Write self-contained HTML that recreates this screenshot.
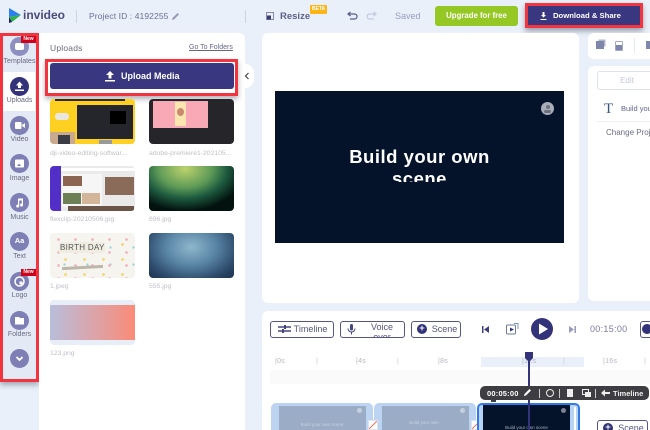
<!DOCTYPE html>
<html style="overflow:hidden;width:650px;height:430px"><head><meta charset="utf-8">
<style>
html,body{margin:0;padding:0}
body{width:650px;height:430px;overflow:hidden;position:relative;background:#e9f0f9;font-family:"Liberation Sans",sans-serif;color:#5b5b8a}
#r{position:absolute;left:0;top:0;width:650px;height:430px;overflow:hidden;background:#e9f0f9}
.a,.a *{box-sizing:border-box}
.a{position:absolute}
.t{position:absolute;white-space:nowrap}
.ic{position:absolute;left:10px;width:19px;height:19px;border-radius:50%;background:#7e80b5}
.lb{position:absolute;left:0;width:39px;text-align:center;font-size:7px;color:#6a6a80;white-space:nowrap}
.th{position:absolute;width:85px;height:45px;border-radius:4px;overflow:hidden}
.cap{position:absolute;font-size:6.800px;color:#c0c0ca;white-space:nowrap}
.btn{position:absolute;box-sizing:border-box;height:17px;border:1px solid #54548f;border-radius:3px;background:#fff;font-size:9px;color:#55557f;text-align:center;line-height:15px}
.clip{position:absolute;top:403px;height:27px;background:#bcd3f2;border-radius:5px 5px 0 0}
.clipi{position:absolute;left:8px;top:3px;width:87px;height:24px;background:#9badc6}
.new{position:absolute;width:15px;height:7px;background:#d0021b;color:#fff;font-size:5px;font-weight:bold;text-align:center;line-height:7px}
</style></head><body><div id="r">

<!-- header -->
<svg class="a" style="left:7px;top:8px" width="16" height="16" viewBox="0 0 16 16"><path d="M2 0 L14 7 L2 9Z" fill="#2d7ff0"/><path d="M2 9 L14 7 L5 14Z" fill="#2fb24a"/><path d="M2 9 L5 14 L2 15Z" fill="#1d1d6b"/></svg>
<div class="t" style="left:23px;top:8px;font-size:12px;font-weight:bold;color:#4a4a80">invideo</div>
<div class="a" style="left:76px;top:10px;width:1px;height:13px;background:#ccd3e0"></div>
<div class="t" style="left:89px;top:11px;font-size:8.500px;color:#6f6f95;letter-spacing:.1px">Project ID : 4192255</div>
<svg class="a" style="left:171px;top:12px" width="9" height="9" viewBox="0 0 9 9"><path d="M1 8 L1.500 6 L6.500 1 L8 2.500 L3 7.500Z" fill="#9a9ab8"/></svg>
<div class="a" style="left:245px;top:10px;width:1px;height:13px;background:#ccd3e0"></div>

<svg class="a" style="left:266px;top:12px" width="8" height="8" viewBox="0 0 8 8"><rect x=".5" y=".5" width="7" height="7" fill="none" stroke="#8a8aa8"/><rect x="1" y="3.500" width="4" height="4" fill="#3c3c70"/></svg>
<div class="t" style="left:280px;top:11px;font-size:9.500px;font-weight:bold;color:#5f5f88">Resize</div>
<div class="a" style="left:310px;top:5px;width:17px;height:9px;background:#fbb516;border-radius:1px;color:#fff;font-size:5px;font-weight:bold;text-align:center;line-height:9px">BETA</div>
<svg class="a" style="left:347px;top:11px" width="11" height="9" viewBox="0 0 11 9"><path d="M3.500 1 L1 3 L3.500 5 M1 3 H7.500 A2.500 2.500 0 0 1 7.500 8 H3" fill="none" stroke="#5a5a85" stroke-width="1.200"/></svg>
<svg class="a" style="left:366px;top:11px" width="11" height="9" viewBox="0 0 11 9"><path d="M7.500 1 L10 3 L7.500 5 M10 3 H3.500 A2.500 2.500 0 0 0 3.500 8 H8" fill="none" stroke="#c2cce0" stroke-width="1.200"/></svg>
<div class="t" style="left:395px;top:11px;font-size:9px;color:#9d9dc0">Saved</div>
<div class="a" style="left:435px;top:6px;width:83px;height:20px;background:#95c824;border-radius:3px;color:#fff;font-size:7.800px;font-weight:bold;text-align:center;line-height:20px">Upgrade for free</div>

<div class="a" style="left:525px;top:3px;width:118px;height:25px;background:#39377f;border:3px solid #f2343f;box-shadow:0 3px 5px rgba(60,60,80,.45);color:#fff;font-size:7.700px;font-weight:bold;line-height:19px;padding-left:25px;white-space:nowrap">Download &amp; Share</div>
<svg class="a" style="left:539px;top:12px" width="9" height="9" viewBox="0 0 9 9"><path d="M3.500 0 H5.500 V3 H7 L4.500 5.500 L2 3 H3.500Z M1.500 7 H7.500 V8 H1.500Z" fill="#fff"/></svg>

<!-- sidebar -->
<div class="a" style="left:0;top:33px;width:39px;height:349px;background:#e3eaf5;overflow:hidden;box-shadow:0 3px 5px rgba(60,60,80,.4)">
  <div class="a" style="left:0;top:39px;width:35px;height:39px;background:#fff"></div>
  <div class="ic" style="top:4px;background:#8d8fc0"><div class="a" style="left:5px;top:6px;width:9px;height:7px;background:#fff;border-radius:2px"></div></div>
  <div class="lb" style="top:25px">Templates</div>
  <div class="ic" style="top:44px;background:#33337a"><svg width="19" height="19" viewBox="0 0 19 19"><path d="M9.500 4.500 L13 8.500 H11 V11 H8 V8.500 H6Z M5 12.500 H14 V14 H5Z" fill="#fff"/></svg></div>
  <div class="lb" style="top:64px">Uploads</div>
  <div class="ic" style="top:83px"><svg width="19" height="19" viewBox="0 0 19 19"><rect x="5" y="6" width="6.500" height="7" rx="1" fill="#fff"/><path d="M12 9 L15 7 V12 L12 10Z" fill="#fff"/></svg></div>
  <div class="lb" style="top:103px">Video</div>
  <div class="ic" style="top:121px"><svg width="19" height="19" viewBox="0 0 19 19"><rect x="5" y="5.500" width="9" height="8" rx="1" fill="#fff"/><path d="M7 12 L9 9.500 L11 12Z" fill="#7e80b5"/></svg></div>
  <div class="lb" style="top:142px">Image</div>
  <div class="ic" style="top:160px"><svg width="19" height="19" viewBox="0 0 19 19"><path d="M8 5.500 H13 V12 A1.500 1.500 0 1 1 11.800 10.600 V7.500 H9.200 V13 A1.500 1.500 0 1 1 8 11.600Z" fill="#fff"/></svg></div>
  <div class="lb" style="top:181px">Music</div>
  <div class="ic" style="top:199px;color:#fff;font-size:7.500px;font-weight:bold;text-align:center;line-height:18px">Aa</div>
  <div class="lb" style="top:220px">Text</div>
  <div class="ic" style="top:239px"><svg width="19" height="19" viewBox="0 0 19 19"><circle cx="9.500" cy="9.500" r="4.500" fill="none" stroke="#fff" stroke-width="1.500"/><rect x="9.500" y="9.500" width="3" height="3" fill="#fff"/></svg></div>
  <div class="lb" style="top:259px">Logo</div>
  <div class="ic" style="top:278px"><svg width="19" height="19" viewBox="0 0 19 19"><path d="M5 6 H9 L10 7 H14 V13.500 H5Z" fill="#fff"/></svg></div>
  <div class="lb" style="top:298px">Folders</div>
  <div class="ic" style="top:316px"><svg width="19" height="19" viewBox="0 0 19 19"><path d="M6.500 8 L9.500 11 L12.500 8" fill="none" stroke="#fff" stroke-width="1.800"/></svg></div>
</div>
<div class="a" style="left:0;top:33px;width:39px;height:349px;border:3px solid #f2343f"></div>
<div class="new" style="left:21px;top:36px">New</div>
<div class="new" style="left:21px;top:269px">New</div>

<!-- uploads panel -->
<div class="a" style="left:39px;top:33px;width:206px;height:397px;background:#fff;border-radius:0 6px 0 0"></div>
<div class="a" style="left:245px;top:64px;width:9px;height:24px;background:#fff;border-radius:0 10px 10px 0"></div>
<svg class="a" style="left:244px;top:72px" width="6" height="8" viewBox="0 0 6 8"><path d="M4.500 1 L1.500 4 L4.500 7" fill="none" stroke="#444" stroke-width="1.200"/></svg>
<div class="t" style="left:50px;top:43px;font-size:8.500px;color:#6b6b80;letter-spacing:.2px">Uploads</div>
<div class="t" style="left:189px;top:44px;font-size:7px;color:#66668a;text-decoration:underline">Go To Folders</div>
<div class="a" style="left:45px;top:59px;width:193px;height:37px;border:3px solid #f2343f;background:#fff;box-shadow:0 3px 5px rgba(60,60,80,.4)"></div>
<div class="a" style="left:50px;top:63px;width:184px;height:26px;background:#39377f;border-radius:3px;color:#fff;font-size:9px;font-weight:bold;line-height:27px;padding-left:71px">Upload Media</div>
<svg class="a" style="left:104px;top:71px" width="12" height="11" viewBox="0 0 12 11"><path d="M6 0 L10 4 H7.500 V7.500 H4.500 V4 H2Z M1 9 H11 V10.500 H1Z" fill="#fff"/></svg>

<!-- thumbs -->
<div class="th" style="left:50px;top:99px;background:#fdd021">
  <div class="a" style="left:27px;top:6px;width:56px;height:34px;background:#25262b"></div>
  <div class="a" style="left:60px;top:12px;width:16px;height:13px;background:#000"></div>
  <div class="a" style="left:5px;top:14px;width:14px;height:7px;background:#e8e8e0;border-radius:3px"></div>
  <div class="a" style="left:0;top:33px;width:25px;height:12px;background:#c9a98f"></div>
  <div class="a" style="left:8px;top:36px;width:12px;height:9px;background:#3a3d45"></div>
  <div class="a" style="left:49px;top:41px;width:13px;height:4px;background:#999"></div>
  <div class="a" style="left:5px;top:0;width:70px;height:2px;background:#3a2a10"></div>
</div>
<div class="cap" style="left:50px;top:150px">dji-video-editing-softwar...</div>
<div class="th" style="left:149px;top:99px;background:#26262a">
  <div class="a" style="left:4px;top:2px;width:55px;height:27px;background:#f9a9b6"></div>
  <div class="a" style="left:26px;top:3px;width:11px;height:24px;background:#fbe6b0"></div>
  <div class="a" style="left:28px;top:9px;width:7px;height:8px;background:#c98a70;border-radius:50%"></div>
</div>
<div class="cap" style="left:149px;top:150px">adobe-premiere1-202105...</div>

<div class="th" style="left:50px;top:166px;background:#eaeaea">
  <div class="a" style="left:0;top:0;width:11px;height:45px;background:#5230c8"></div>
  <div class="a" style="left:11px;top:2px;width:74px;height:3px;background:#fff"></div>
  <div class="a" style="left:12px;top:8px;width:40px;height:33px;background:#f6f6f6"></div>
  <div class="a" style="left:13px;top:10px;width:19px;height:10px;background:#8b6552"></div>
  <div class="a" style="left:13px;top:27px;width:18px;height:11px;background:#6d7f55"></div>
  <div class="a" style="left:32px;top:27px;width:18px;height:11px;background:#d3b59a"></div>
  <div class="a" style="left:55px;top:11px;width:29px;height:18px;background:#8a6a58"></div>
  <div class="a" style="left:18px;top:40px;width:66px;height:5px;background:#6a5548"></div>
</div>
<div class="cap" style="left:50px;top:216px">flexclip-20210506.jpg</div>
<div class="th" style="left:149px;top:166px;background:radial-gradient(ellipse 60px 42px at 36px 3px,#bcd26c 0%,#5d9a57 45%,#1d5a3f 70%,#03120f 100%)"></div>
<div class="cap" style="left:149px;top:216px">696.jpg</div>

<div class="th" style="left:50px;top:233px;background:#f6f4ee">
  <div class="a" style="left:0;top:0;width:85px;height:45px;opacity:.75;background:radial-gradient(circle 1.500px,#f4a3b5 90%,transparent) 0 0/17px 13px,radial-gradient(circle 1.500px,#f3cf4e 90%,transparent) 6px 4px/19px 15px,radial-gradient(circle 1.200px,#71c3dc 90%,transparent) 3px 6px/23px 17px"></div>
  <div class="a" style="left:9px;top:9px;width:46px;height:11px;background:#efece2"></div>
  <div class="t" style="left:10px;top:10px;font-size:8px;color:#555;letter-spacing:.3px">BIRTH DAY</div>
  <div class="a" style="left:12px;top:33px;width:41px;height:3px;background:#bdb7aa;transform:rotate(-3deg)"></div>
</div>
<div class="cap" style="left:50px;top:283px">1.jpeg</div>
<div class="th" style="left:149px;top:233px;background:radial-gradient(ellipse 55px 40px at 42px 14px,#8fb6cc 0%,#5a86a6 45%,#2d4a6b 85%,#223b57 100%)"></div>
<div class="cap" style="left:149px;top:283px">555.jpg</div>

<div class="th" style="left:50px;top:300px;background:#e7eef8"><div class="a" style="left:0;top:5px;width:85px;height:35px;background:linear-gradient(90deg,#b9bedc,#fb8b78)"></div></div>
<div class="cap" style="left:50px;top:350px">123.png</div>

<!-- canvas -->
<div class="a" style="left:262px;top:33px;width:317px;height:270px;background:#fff;border-radius:6px"></div>
<div class="a" style="left:275px;top:91px;width:289px;height:152px;background:#04132a;overflow:hidden">
  <div class="t" style="left:0;width:289px;top:55px;height:36px;overflow:hidden;text-align:center;color:#fff;font-size:18.500px;font-weight:bold;line-height:22px;white-space:normal;letter-spacing:.5px">Build your own<br>scene</div>
</div>
<div class="a" style="left:541px;top:102px;width:13px;height:13px;border-radius:50%;background:#a9aeb8"><div class="a" style="left:4.500px;top:3px;width:4px;height:4px;border-radius:50%;background:#6c7280"></div><div class="a" style="left:3px;top:7.500px;width:7px;height:3px;background:#6c7280;border-radius:2px"></div></div>

<!-- right -->
<div class="a" style="left:588px;top:33px;width:62px;height:26px;background:#fff;border-radius:6px 0 0 6px"></div>
<div class="a" style="left:596px;top:41px;width:8px;height:8px;background:#7f86ac;box-shadow:2px -2px 0 -0.500px #b0b5cc"></div>
<div class="a" style="left:615px;top:41px;width:8px;height:10px;border:1px solid #a4aac4;border-radius:1px;background:linear-gradient(#fff 40%,#7f86ac 40%)"></div>
<div class="a" style="left:634px;top:38px;width:1px;height:15px;background:#e4e8f0"></div>
<div class="a" style="left:646px;top:41px;width:4px;height:8px;background:#7f86ac"></div>
<div class="a" style="left:588px;top:66px;width:62px;height:235px;background:#fff;border-radius:6px 0 0 6px"></div>
<div class="a" style="left:597px;top:71px;width:60px;height:19px;border:1px solid #dde2ee;border-radius:3px;font-size:8px;color:#c4c8df;text-align:center;line-height:17px">Edit</div>
<div class="t" style="left:604px;top:101px;font-size:15px;font-family:'Liberation Serif',serif;color:#3a5580">T</div>
<div class="t" style="left:621px;top:104px;font-size:7.500px;color:#5f6490">Build you</div>
<div class="a" style="left:596px;top:121px;width:54px;height:1px;background:#edf0f5"></div>
<div class="t" style="left:606px;top:128px;font-size:8px;color:#6d6d82">Change Proje</div>

<!-- timeline -->
<div class="a" style="left:262px;top:311px;width:388px;height:119px;background:#fff;border-radius:6px 0 0 0"></div>
<div class="btn" style="left:270px;top:321px;width:64px;padding-left:17px">Timeline</div>
<svg class="a" style="left:278px;top:324px" width="13" height="10" viewBox="0 0 13 10"><path d="M0 3 H13 M0 7 H13" stroke="#45457f" stroke-width="1.400"/><rect x="6" y="1" width="2" height="4" fill="#45457f"/><rect x="4" y="5" width="2" height="4" fill="#45457f"/></svg>
<div class="btn" style="left:340px;top:321px;width:65px;padding-left:19px;line-height:10px;overflow:hidden;white-space:normal">Voice<br>over</div>
<svg class="a" style="left:347px;top:324px" width="9" height="11" viewBox="0 0 9 11"><rect x="3" y="0" width="3" height="6.500" rx="1.500" fill="#45457f"/><path d="M1 4.500 A3.500 3.500 0 0 0 8 4.500 M4.500 8 V10.500" fill="none" stroke="#45457f"/></svg>
<div class="btn" style="left:411px;top:321px;width:50px;padding-left:17px">Scene</div>
<div class="a" style="left:417px;top:324px;width:10px;height:10px;border-radius:50%;background:#33337a;color:#fff;font-size:9px;font-weight:bold;line-height:9.500px;text-align:center">+</div>

<svg class="a" style="left:481px;top:325px" width="9" height="9" viewBox="0 0 9 9"><path d="M1 1 H2.500 V8 H1Z M8 1 V8 L3 4.500Z" fill="#3f3f7f"/></svg>
<svg class="a" style="left:505px;top:322px" width="14" height="14" viewBox="0 0 14 14"><rect x="1.500" y="3" width="9" height="9" rx="1" fill="#fff" stroke="#6a7aa0"/><path d="M5 5.500 L9 7.500 L5 9.500Z" fill="#33337a"/><path d="M9 1.500 H13 V7" fill="none" stroke="#7f90b5"/></svg>
<div class="a" style="left:531px;top:318px;width:22px;height:22px;border-radius:50%;background:#33337a"></div>
<svg class="a" style="left:531px;top:318px" width="22" height="22" viewBox="0 0 22 22"><path d="M8 5.500 L17 11 L8 16.500Z" fill="#fff"/></svg>
<svg class="a" style="left:568px;top:325px" width="9" height="9" viewBox="0 0 9 9"><path d="M1 1 L6 4.500 L1 8Z M6.500 1 H8 V8 H6.500Z" fill="#9a9abd"/></svg>
<div class="t" style="left:590px;top:324px;font-size:9px;color:#7b7aa0;letter-spacing:.3px">00:15:00</div>
<div class="btn" style="left:640px;top:321px;width:20px"></div>
<div class="a" style="left:642px;top:324px;width:10px;height:10px;border-radius:50%;background:#33337a"></div>

<!-- ruler -->
<div class="a" style="left:481px;top:357px;width:103px;height:10px;background:#e9f0f9"></div>
<div class="t" style="left:275px;top:358px;font-size:7px;color:#b5b5c2;letter-spacing:.3px">|0s</div>
<div class="t" style="left:316px;top:358px;font-size:7px;color:#c8c8d2">|</div>
<div class="t" style="left:356px;top:358px;font-size:7px;color:#b5b5c2;letter-spacing:.3px">|4s</div>
<div class="t" style="left:397px;top:358px;font-size:7px;color:#c8c8d2">|</div>
<div class="t" style="left:438px;top:358px;font-size:7px;color:#b5b5c2;letter-spacing:.3px">|8s</div>
<div class="t" style="left:522px;top:358px;font-size:7px;color:#b5b5c2;letter-spacing:.3px">|12s</div>
<div class="t" style="left:563px;top:358px;font-size:7px;color:#c8c8d2">|</div>
<div class="t" style="left:603px;top:358px;font-size:7px;color:#b5b5c2;letter-spacing:.3px">|16s</div>
<div class="t" style="left:644px;top:358px;font-size:7px;color:#c8c8d2">|</div>
<div class="a" style="left:270px;top:370px;width:380px;height:14px;background:#fafafa"></div>

<!-- clips -->
<div class="clip" style="left:271px;width:102px"><div class="clipi"></div>
<div class="a" style="left:16px;top:19px;width:70px;text-align:center;font-size:4.500px;color:#c6d1e0;white-space:nowrap">Build your own scene</div>
<div class="a" style="left:86px;top:5px;width:5px;height:5px;border-radius:50%;background:#c6cfdd"></div></div>
<div class="clip" style="left:374px;width:102px"><div class="clipi"></div>
<div class="a" style="left:10px;top:17px;width:80px;text-align:center;font-size:4.500px;color:#c6d1e0;white-space:nowrap">Build your own</div>
<div class="a" style="left:86px;top:5px;width:5px;height:5px;border-radius:50%;background:#c6cfdd"></div></div>
<div class="a" style="left:368px;top:420px;width:10px;height:10px;background:#fff;border:1px solid #dde4f0"><svg width="8" height="8" style="display:block"><path d="M0 8 L8 0" stroke="#f0735f"/></svg></div>
<div class="a" style="left:471px;top:420px;width:10px;height:10px;background:#fff;border:1px solid #dde4f0"><svg width="8" height="8" style="display:block"><path d="M0 8 L8 0" stroke="#f0735f"/></svg></div>
<div class="a" style="left:477px;top:403px;width:103px;height:27px;background:#b7d3f6;border:2px solid #2f7ae5;border-bottom:0;border-radius:5px 5px 0 0"></div>
<div class="a" style="left:483px;top:405px;width:87px;height:25px;background:#04132a"></div>
<div class="a" style="left:483px;top:425px;width:87px;text-align:center;font-size:4.500px;color:#a8b2c2;white-space:nowrap">Build your own scene</div>
<div class="a" style="left:561px;top:408px;width:5px;height:5px;border-radius:50%;background:#7a8292"></div>
<div class="a" style="left:574px;top:407px;width:2px;height:23px;background:#fff"></div>

<!-- playhead -->
<div class="a" style="left:528px;top:356px;width:2px;height:74px;background:#33337a"></div>
<svg class="a" style="left:524px;top:352px" width="10" height="10" viewBox="0 0 10 10"><path d="M1 0 H9 V6 L5 10 L1 6Z" fill="#33337a"/></svg>

<!-- tooltip -->
<div class="a" style="left:480px;top:386px;width:169px;height:14px;background:#3e3e42;border-radius:5px"></div>
<div class="a" style="left:491px;top:399px;width:5px;height:3px;background:#3e3e42"></div>
<div class="t" style="left:487px;top:388.500px;font-size:7.500px;font-weight:bold;color:#fff;letter-spacing:.2px">00:05:00</div>
<svg class="a" style="left:523px;top:388px" width="9" height="9" viewBox="0 0 9 9"><path d="M1 8 L1.500 6 L6.500 1 L8 2.500 L3 7.500Z" fill="#fff"/></svg>
<div class="a" style="left:539px;top:389px;width:1px;height:9px;background:#ccc"></div>
<div class="a" style="left:546px;top:389px;width:8px;height:8px;border:1.500px solid #eee;border-radius:50%"></div>
<div class="a" style="left:559px;top:389px;width:1px;height:9px;background:#ccc"></div>
<div class="a" style="left:567px;top:389px;width:6px;height:8px;background:#eee"></div>
<div class="a" style="left:582px;top:389px;width:7px;height:6px;border:1px solid #eee"></div>
<div class="a" style="left:585px;top:392px;width:6px;height:5px;background:#eee"></div>
<div class="a" style="left:595px;top:389px;width:1px;height:9px;background:#ccc"></div>
<svg class="a" style="left:601px;top:389px" width="9" height="8" viewBox="0 0 9 8"><path d="M0 4 L4 0.500 V3 H9 V5 H4 V7.500Z" fill="#eee"/></svg>
<div class="t" style="left:613px;top:388.500px;font-size:7.500px;font-weight:bold;color:#eee">Timeline</div>

<div class="btn" style="left:597px;top:420px;width:51px;height:17px;padding-left:17px;font-size:9px">Scene</div>
<div class="a" style="left:603px;top:423px;width:10px;height:10px;border-radius:50%;background:#33337a;color:#fff;font-size:9px;font-weight:bold;line-height:9.500px;text-align:center">+</div>

</div></body></html>
